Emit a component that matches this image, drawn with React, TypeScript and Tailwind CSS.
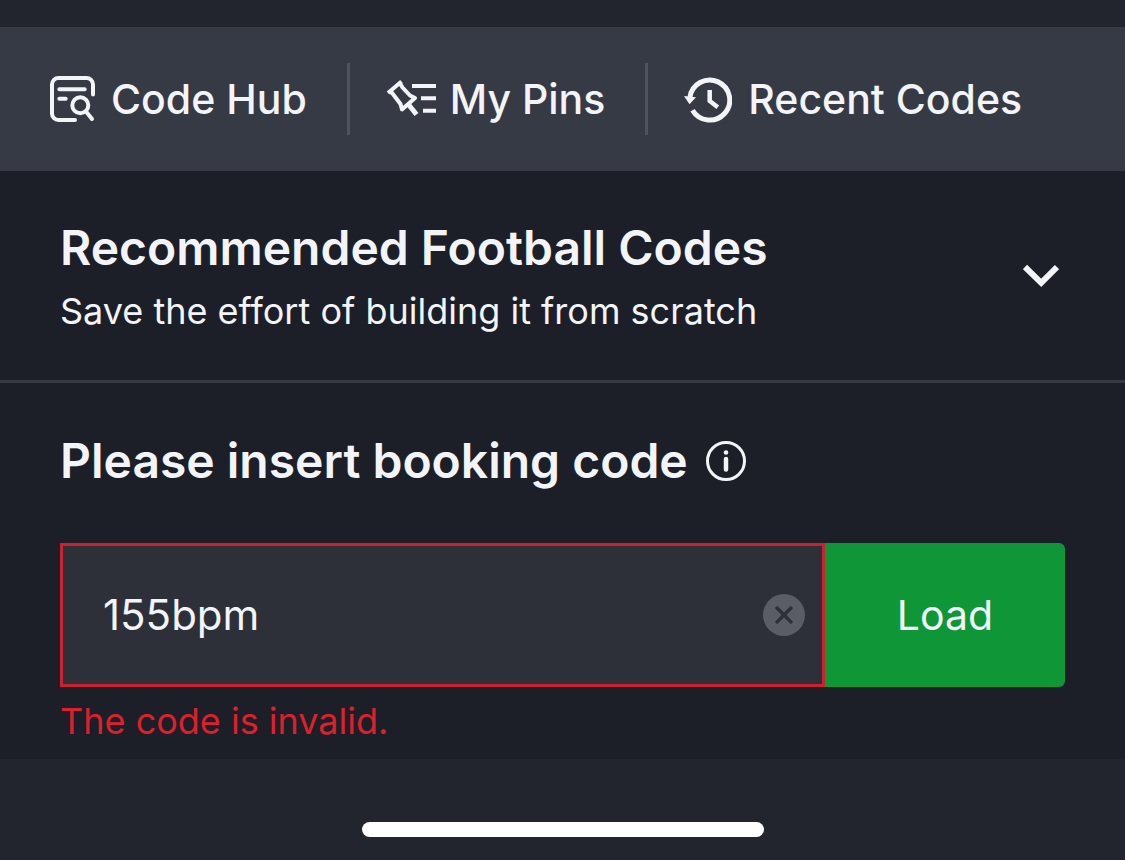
import { useRef, useState } from "react";

const CodeHubIcon = () => (
  <svg className="h-12 w-12 shrink-0" viewBox="0 0 48 48" fill="none" stroke="currentColor" strokeWidth="4" strokeLinecap="round" aria-hidden="true">
    <path d="M26 45H9.5A6.5 6.5 0 0 1 3 38.500V9.500A6.500 6.500 0 0 1 9.500 3H37.500A6.500 6.500 0 0 1 44 9.500V19.500" />
    <path d="M10.300 14.300H35.700M10.300 23.700H16.700M37 36.500L43 44" />
    <circle cx="31.300" cy="30.300" r="8" />
  </svg>
);

const PinsIcon = () => (
  <svg className="h-12 w-13 shrink-0" viewBox="0 0 52 48" fill="none" stroke="currentColor" strokeWidth="4" aria-hidden="true">
    <path d="M2 18L15.500 6.500M13.800 8L16.500 12.500L24 20.500L29 23L16 34.500L14.500 29L6.500 18.500L4.500 16.500" strokeLinejoin="round" />
    <path d="M22.500 29.500L30.500 39.500" strokeWidth="5" />
    <path d="M26 11H50M35 23.300H50M37 35.700H50" />
  </svg>
);

const RecentIcon = () => (
  <svg className="h-12 w-12 shrink-0" viewBox="0 0 48 48" fill="none" stroke="currentColor" strokeWidth="5" aria-hidden="true">
    <path d="M8.500 35.200A20 20 0 1 0 5.900 22.500" />
    <path d="M0 21L12 22.300L5.500 29.300Z" fill="currentColor" stroke="none" />
    <path d="M25.700 15V26L33.800 32.300" strokeWidth="4.500" />
  </svg>
);

export default function App() {
  const [code, setCode] = useState("155bpm");
  const field = useRef<HTMLInputElement>(null);

  return (
    <div className="flex min-h-screen flex-col bg-[#22252e] pt-[27px] font-['Inter',sans-serif] text-[#f2f4f8]">
      <nav className="flex h-36 items-center bg-[#363a45] text-[41px] leading-[48px] font-medium whitespace-nowrap">
        <a href="#hub" className="flex items-center gap-3.5 pr-10 pl-[49px]">
          <CodeHubIcon />
          Code Hub
        </a>
        <a href="#pins" className="flex h-18 items-center gap-3 border-l-3 border-[#4f535d] pr-10 pl-9">
          <PinsIcon />
          My Pins
        </a>
        <a href="#recent" className="flex h-18 items-center gap-4 border-l-3 border-[#4f535d] pl-9">
          <RecentIcon />
          Recent Codes
        </a>
      </nav>

      <main className="bg-[#1c1f27]">
        <section className="flex items-center justify-between border-b-3 border-[#363a43] px-15 pt-12 pb-[41px]">
          <div>
            <h2 className="text-[48px] leading-[58px] font-semibold">Recommended Football Codes</h2>
            <p className="mt-1.5 text-[36px] leading-[56px]">Save the effort of building it from scratch</p>
          </div>
          <button type="button" aria-label="Show recommended codes" className="mr-1.5 mb-1.5">
            <svg className="h-6 w-9" viewBox="0 0 36 24" fill="none" stroke="currentColor" strokeWidth="6" aria-hidden="true">
              <path d="M2 3L18.200 18.800L34 3" />
            </svg>
          </button>
        </section>

        <form className="px-15 pt-12 pb-2.5" onSubmit={(e) => e.preventDefault()}>
          <div className="flex items-center gap-4">
            <label htmlFor="booking-code" className="text-[48px] leading-[60px] font-semibold">
              Please insert booking code
            </label>
            <button type="button" aria-label="About booking codes">
              <svg className="h-11 w-11" viewBox="0 0 44 44" fill="none" stroke="currentColor" strokeLinecap="round" aria-hidden="true">
                <circle cx="22" cy="22" r="18.500" strokeWidth="3" />
                <path d="M22 20V30.500" strokeWidth="4.500" />
                <circle cx="22" cy="13.500" r="2.300" fill="currentColor" stroke="none" />
              </svg>
            </button>
          </div>

          <div className="mt-13 flex h-36">
            <div className="flex min-w-0 flex-1 items-center border-3 border-[#cf202d] bg-[#2d3039] pr-4 pl-10">
              <input
                ref={field}
                id="booking-code"
                type="text"
                value={code}
                onChange={(e) => setCode(e.target.value)}
                aria-invalid="true"
                aria-describedby="code-error"
                className="min-w-0 flex-1 bg-transparent text-[42px] leading-[60px] outline-none"
              />
              <button
                type="button"
                aria-label="Clear"
                onClick={() => {
                  setCode("");
                  field.current?.focus();
                }}
              >
                <svg className="h-11 w-11" viewBox="0 0 44 44" aria-hidden="true">
                  <circle cx="22" cy="22" r="21" fill="#5a5d66" />
                  <path d="M15 15L29 29M29 15L15 29" stroke="#2d3039" strokeWidth="3.500" strokeLinecap="round" />
                </svg>
              </button>
            </div>
            <button type="submit" className="w-60 rounded-r-md bg-[#0f9737] text-[41px] leading-[60px] font-normal">
              Load
            </button>
          </div>
          <p id="code-error" className="mt-1.5 text-[36px] leading-[56px] text-[#dc202c]">
            The code is invalid.
          </p>
        </form>
      </main>

      <footer className="flex flex-1 items-end justify-center pb-[23px]">
        <div className="h-[15px] w-[402px] rounded-full bg-white" />
      </footer>
    </div>
  );
}
